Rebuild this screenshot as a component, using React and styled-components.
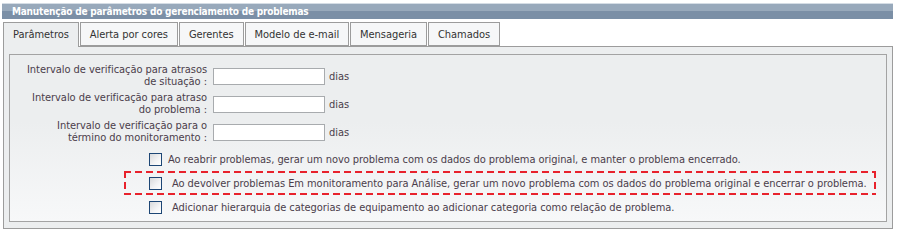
import React from "react";
import styled, { createGlobalStyle } from "styled-components";

const GlobalStyle = createGlobalStyle`
  body {
    margin: 0;
    background: #ffffff;
    font-family: "DejaVu Sans Condensed", "DejaVu Sans", sans-serif;
    font-size: 11px;
    letter-spacing: -0.05px;
  }
`;

const tabs = [
  "Parâmetros",
  "Alerta por cores",
  "Gerentes",
  "Modelo de e-mail",
  "Mensageria",
  "Chamados"
];

const intervals = [
  ["Intervalo de verificação para atrasos", "de situação :"],
  ["Intervalo de verificação para atraso", "do problema :"],
  ["Intervalo de verificação para o", "término do monitoramento :"]
];

const options = [
  {
    text:
      "Ao reabrir problemas, gerar um novo problema com os dados do problema original, e manter o problema encerrado.",
    indent: 6,
    highlight: false
  },
  {
    text:
      "Ao devolver problemas Em monitoramento para Análise, gerar um novo problema com os dados do problema original e encerrar o problema.",
    indent: 10,
    highlight: true
  },
  {
    text:
      "Adicionar hierarquia de categorias de equipamento ao adicionar categoria como relação de problema.",
    indent: 10,
    highlight: false
  }
];

class App extends React.Component {
  state = {
    activeTab: 0
  };

  selectTab = index => {
    this.setState({ activeTab: index });
  };

  render() {
    const { activeTab } = this.state;
    return (
      <Page>
        <GlobalStyle />
        <TitleBar>Manutenção de parâmetros do gerenciamento de problemas</TitleBar>
        <TabRow>
          {tabs.map((tab, i) => (
            <Tab key={tab} active={i === activeTab} onClick={() => this.selectTab(i)}>
              {tab}
            </Tab>
          ))}
        </TabRow>
        <Panel>
          <Inner>
            {intervals.map(lines => (
              <FieldRow key={lines[0]}>
                <Label>
                  {lines[0]}
                  <br />
                  {lines[1]}
                </Label>
                <NumberInput type="text" />
                <Unit>dias</Unit>
              </FieldRow>
            ))}
            <Options>
              {options.map(option => (
                <OptionRow key={option.text} highlight={option.highlight}>
                  <Check type="checkbox" />
                  <OptionText indent={option.indent}>{option.text}</OptionText>
                </OptionRow>
              ))}
            </Options>
          </Inner>
        </Panel>
      </Page>
    );
  }
}

const Page = styled.div`
  width: 890px;
  padding: 3px 0 0 3px;
`;

const TitleBar = styled.div`
  margin-left: -1px;
  height: 15px;
  line-height: 15px;
  padding-left: 10px;
  color: #ffffff;
  font-weight: bold;
  font-size: 10px;
  letter-spacing: -0.2px;
  border-top: 1px solid #d5dde5;
  background: linear-gradient(#98a9bb 0, #98a9bb 50%, #7b8fa6 50%, #7b8fa6 100%);
`;

const TabRow = styled.div`
  display: flex;
  align-items: flex-start;
  gap: 1px;
  height: 24px;
  margin-top: 3px;
  position: relative;
  z-index: 1;
`;

const Tab = styled.div`
  box-sizing: border-box;
  height: ${props => (props.active ? "25px" : "24px")};
  padding: 0 9px;
  display: flex;
  align-items: center;
  color: #333333;
  cursor: pointer;
  border: 1px solid #9c9c9c;
  border-bottom: ${props => (props.active ? "none" : "1px solid #9c9c9c")};
  background: ${props => (props.active ? "#eceeef" : "#f6f7f8")};
  padding-bottom: ${props => (props.active ? "1px" : "0")};
`;

const Panel = styled.div`
  border: 1px solid #9c9c9c;
  background: #eceeef;
  padding: 7px 5px 6px 5px;
`;

const Inner = styled.div`
  border: 1px solid #a3a3a3;
  height: 168px;
  box-sizing: border-box;
  padding-top: 7px;
  background: linear-gradient(#eceeef 0, #eceeef 40%, #f7f8f9 100%);
`;

const FieldRow = styled.div`
  display: flex;
  align-items: center;
  height: 28px;
`;

const Label = styled.div`
  width: 197px;
  text-align: right;
  line-height: 12px;
  color: #4b3d4b;
`;

const NumberInput = styled.input`
  margin: 0 0 0 6px;
  width: 112px;
  height: 17px;
  box-sizing: border-box;
  border: 1px solid #a8abae;
  background: #ffffff;
  padding: 0 3px;
  font: inherit;
`;

const Unit = styled.span`
  margin-left: 4px;
  color: #4b3d4b;
`;

const Options = styled.div`
  display: flex;
  flex-direction: column;
  padding: 1px 0 0 114px;
`;

const dashH = "repeating-linear-gradient(90deg, #e8222c 0 7px, transparent 7px 11px)";
const dashV = "repeating-linear-gradient(180deg, #e8222c 0 7px, transparent 7px 11px)";

const OptionRow = styled.label`
  display: flex;
  align-items: center;
  height: 24px;
  width: 752px;
  box-sizing: border-box;
  padding-left: 25px;
  background: ${props =>
    props.highlight
      ? `${dashH} top left / 100% 2px no-repeat, ${dashH} bottom left / 100% 2px no-repeat, ${dashV} top left / 2px 100% no-repeat, ${dashV} top right / 2px 100% no-repeat`
      : "none"};
`;

const Check = styled.input`
  appearance: none;
  margin: 0;
  width: 13px;
  height: 13px;
  flex: none;
  border: 1px solid #1d4675;
  background: linear-gradient(135deg, #d8d9db 0, #f4f4f5 60%, #ffffff 100%);
`;

const OptionText = styled.span`
  margin-left: ${props => props.indent}px;
  color: #4b3d4b;
  white-space: nowrap;
`;

export default App;
